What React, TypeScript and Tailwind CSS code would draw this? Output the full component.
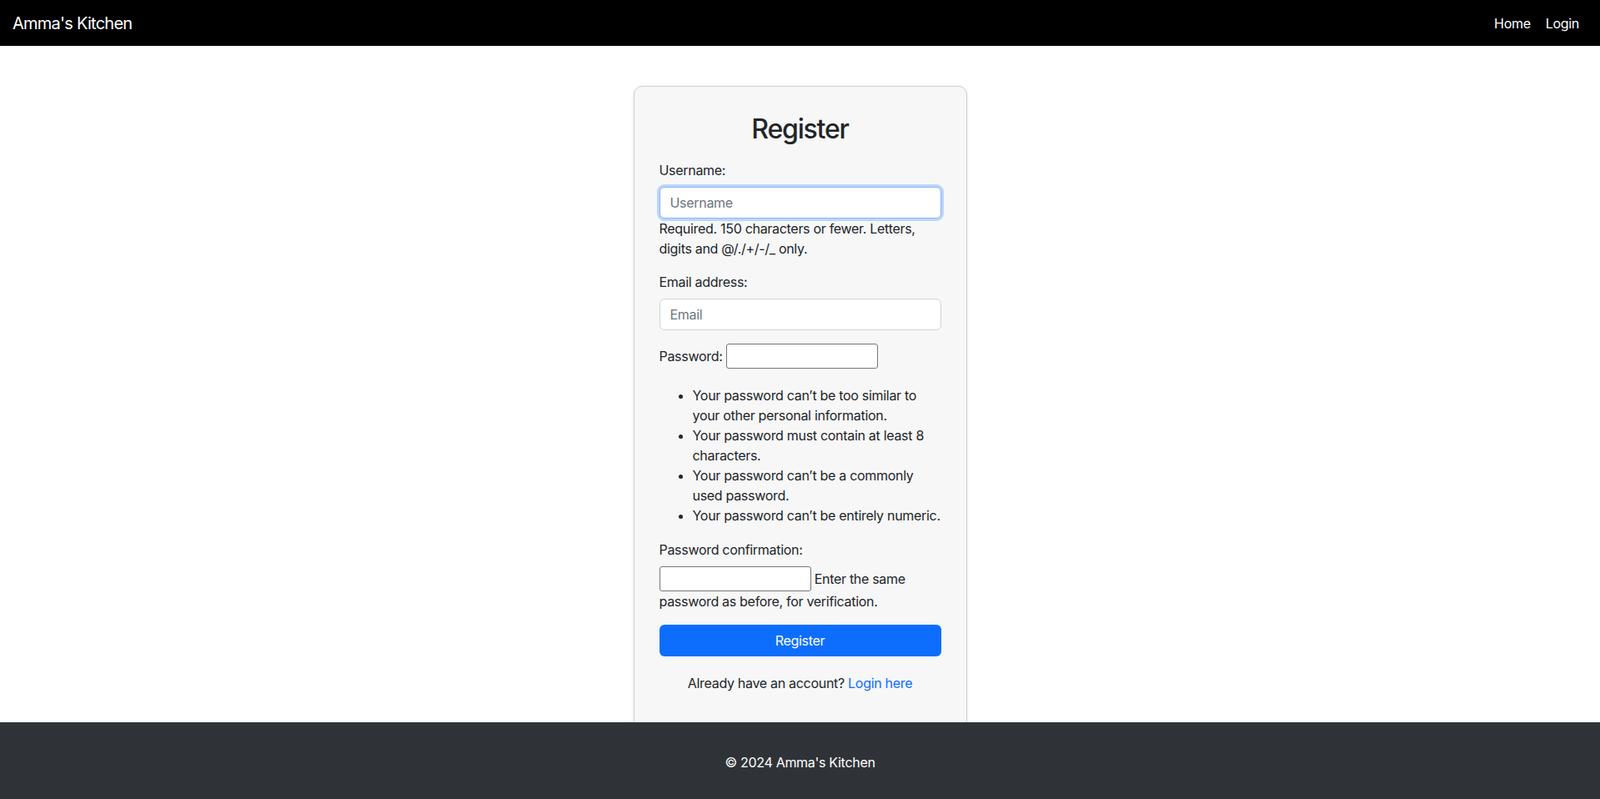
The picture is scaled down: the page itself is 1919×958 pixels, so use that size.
const font = { fontFamily: 'Inter, "Liberation Sans", sans-serif' };

const rules = [
  "Your password can’t be too similar to your other personal information.",
  "Your password must contain at least 8 characters.",
  "Your password can’t be a commonly used password.",
  "Your password can’t be entirely numeric.",
];

function Navbar() {
  return (
    <nav className="h-[55px] bg-black flex items-center justify-between pl-[15px] pr-[25px] text-white">
      <a href="#" className="text-[20px] leading-[30px] tracking-[-0.75px]">Amma's Kitchen</a>
      <div className="flex items-center gap-[18px] text-[16px] leading-[24px] tracking-[-0.3px]">
        <a href="#">Home</a>
        <a href="#">Login</a>
      </div>
    </nav>
  );
}

function RegisterCard() {
  return (
    <div className="w-[400px] mx-auto bg-[#f7f7f7] border border-[#cfcfcf] rounded-[10px] shadow-[0_1px_4px_rgba(0,0,0,0.08)] px-[30px] pt-[30px] pb-[46px]">
      <h2 className="text-[32px] leading-[38px] font-medium text-center tracking-[-1.2px] mt-[2px] mb-[18px]">Register</h2>

      <form>
        <div className="mb-[16px]">
          <label className="block mb-[8px]">Username:</label>
          <input
            autoFocus
            type="text"
            placeholder="Username"
            className="block w-full h-[38px] px-[12px] bg-white border border-[#86b7fe] rounded-[6px] shadow-[0_0_0_3px_rgba(13,110,253,0.25)] outline-none placeholder:text-[#6c757d]"
          />
          <div>Required. 150 characters or fewer. Letters, digits and @/./+/-/_ only.</div>
        </div>

        <div className="mb-[16px]">
          <label className="block mb-[8px]">Email address:</label>
          <input
            type="email"
            placeholder="Email"
            className="block w-full h-[38px] px-[12px] bg-white border border-[#ced4da] rounded-[6px] outline-none placeholder:text-[#6c757d]"
          />
        </div>

        <div>
          <label>Password: </label>
          <input
            type="password"
            className="inline-block align-baseline w-[182px] h-[30px] px-[2px] bg-white border border-[#767676] rounded-[3px] outline-none"
          />
        </div>

        <ul className="list-disc pl-[40px] mt-[20px] mb-[17px]">
          {rules.map((r) => (
            <li key={r}>{r}</li>
          ))}
        </ul>

        <div className="mb-[16px]">
          <label className="block mb-[8px]">Password confirmation:</label>
          <div>
            <input
              type="password"
              className="inline-block align-baseline w-[182px] h-[30px] px-[2px] bg-white border border-[#767676] rounded-[3px] outline-none"
            />{" "}
            Enter the same password as before, for verification.
          </div>
        </div>

        <button type="button" className="block w-full h-[38px] bg-[#0d6efd] text-white rounded-[6px]">
          Register
        </button>
      </form>

      <p className="text-center mt-[20px]">
        Already have an account? <a href="#" className="text-[#0d6efd]">Login here</a>
      </p>
    </div>
  );
}

export default function App() {
  return (
    <div className="min-h-screen bg-white text-[#212529] text-[16px] leading-[24px] tracking-[-0.3px]" style={font}>
      <Navbar />
      <main className="pt-[48px] pb-[110px]">
        <RegisterCard />
      </main>
      <footer className="fixed bottom-0 inset-x-0 h-[92px] bg-[#2f3337] text-white text-center pt-[36px]">
        © 2024 Amma's Kitchen
      </footer>
    </div>
  );
}
